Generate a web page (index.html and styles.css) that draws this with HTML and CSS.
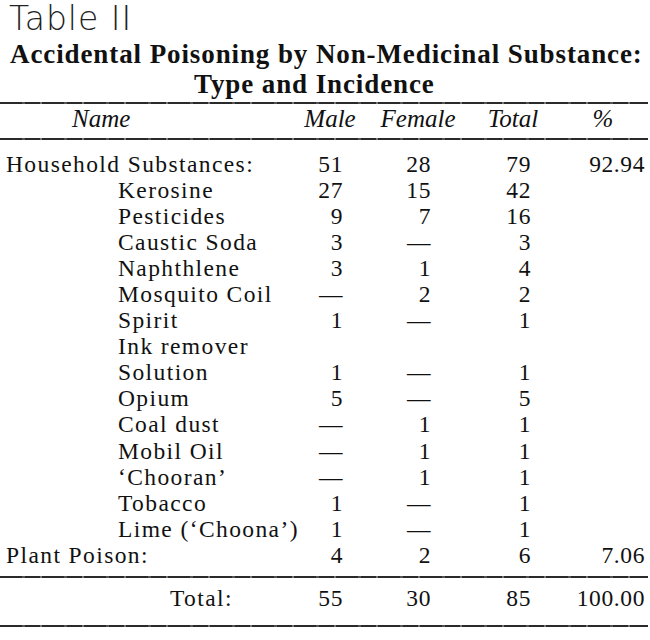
FILE: index.html
```html
<!DOCTYPE html>
<html lang="en">
<head>
<meta charset="utf-8">
<title>Table II</title>
<link rel="stylesheet" href="styles.css">
</head>
<body>
<div class="page">
  <div class="table-no">Table II</div>
  <div class="caption">
    <div class="caption-line">Accidental Poisoning by Non-Medicinal Substance:</div>
    <div class="caption-line caption-line--second">Type and Incidence</div>
  </div>
  <div class="rule rule--top"></div>
  <div class="head">
    <span class="h-name">Name</span>
    <span>Male</span>
    <span>Female</span>
    <span>Total</span>
    <span class="h-pct">%</span>
  </div>
  <div class="rule"></div>
  <div class="body">
    <div class="row"><span class="name">Household Substances:</span><span>51</span><span>28</span><span>79</span><span>92.94</span></div>
    <div class="row"><span class="name sub">Kerosine</span><span>27</span><span>15</span><span>42</span><span></span></div>
    <div class="row"><span class="name sub">Pesticides</span><span>9</span><span>7</span><span>16</span><span></span></div>
    <div class="row"><span class="name sub">Caustic Soda</span><span>3</span><span>—</span><span>3</span><span></span></div>
    <div class="row"><span class="name sub">Naphthlene</span><span>3</span><span>1</span><span>4</span><span></span></div>
    <div class="row"><span class="name sub">Mosquito Coil</span><span>—</span><span>2</span><span>2</span><span></span></div>
    <div class="row"><span class="name sub">Spirit</span><span>1</span><span>—</span><span>1</span><span></span></div>
    <div class="row"><span class="name sub">Ink remover</span><span></span><span></span><span></span><span></span></div>
    <div class="row"><span class="name sub">Solution</span><span>1</span><span>—</span><span>1</span><span></span></div>
    <div class="row"><span class="name sub">Opium</span><span>5</span><span>—</span><span>5</span><span></span></div>
    <div class="row"><span class="name sub">Coal dust</span><span>—</span><span>1</span><span>1</span><span></span></div>
    <div class="row"><span class="name sub">Mobil Oil</span><span>—</span><span>1</span><span>1</span><span></span></div>
    <div class="row"><span class="name sub">‘Chooran’</span><span>—</span><span>1</span><span>1</span><span></span></div>
    <div class="row"><span class="name sub">Tobacco</span><span>1</span><span>—</span><span>1</span><span></span></div>
    <div class="row"><span class="name sub">Lime (‘Choona’)</span><span>1</span><span>—</span><span>1</span><span></span></div>
    <div class="row"><span class="name">Plant Poison:</span><span>4</span><span>2</span><span>6</span><span>7.06</span></div>
  </div>
  <div class="rule"></div>
  <div class="total">
    <div class="row"><span class="name total-label">Total:</span><span>55</span><span>30</span><span>85</span><span>100.00</span></div>
  </div>
  <div class="rule"></div>
</div>
</body>
</html>
```

FILE: styles.css
```css
html, body {
  margin: 0;
  padding: 0;
  background: #ffffff;
}

.page {
  width: 650px;
  color: #111111;
  font-family: "Liberation Serif", "Times New Roman", serif;
}

.table-no {
  font-family: "DejaVu Sans", "Liberation Sans", sans-serif;
  font-weight: 200;
  font-size: 33px;
  line-height: 38.5px;
  padding-left: 9px;
  color: #222222;
  letter-spacing: 1px;
}

.caption {
  font-weight: bold;
  font-size: 27px;
  line-height: 30px;
  letter-spacing: 0.9px;
}

.caption-line {
  padding-left: 10px;
  white-space: nowrap;
}

.caption-line--second {
  padding-left: 194px;
}

.rule {
  height: 2px;
  width: 648px;
  background: repeating-linear-gradient(90deg, #2a2a2a 0 22px, #555 22px 25px, #2a2a2a 25px 40px, #777 40px 42px);
}

.rule--top {
  margin-top: 3px;
}

.head {
  display: grid;
  grid-template-columns: 290px 80px 96px 94px 86px;
  font-style: italic;
  font-size: 25px;
  line-height: 28px;
  padding-top: 1px;
  padding-bottom: 5px;
  text-align: center;
}

.head .h-name {
  text-align: left;
  padding-left: 72px;
}

.body {
  padding-top: 11px;
  padding-bottom: 8px;
}

.row {
  display: grid;
  grid-template-columns: 290px 53px 88px 100px 114px;
  font-size: 23.5px;
  line-height: 26.1px;
  letter-spacing: 0.6px;
  text-align: right;
  white-space: nowrap;
}

.row .name {
  text-align: left;
  padding-left: 6px;
  letter-spacing: 1.4px;
}

.row .name.sub {
  padding-left: 118px;
}

.total {
  padding-top: 7px;
  padding-bottom: 14px;
}

.row .name.total-label {
  padding-left: 170px;
}
```
